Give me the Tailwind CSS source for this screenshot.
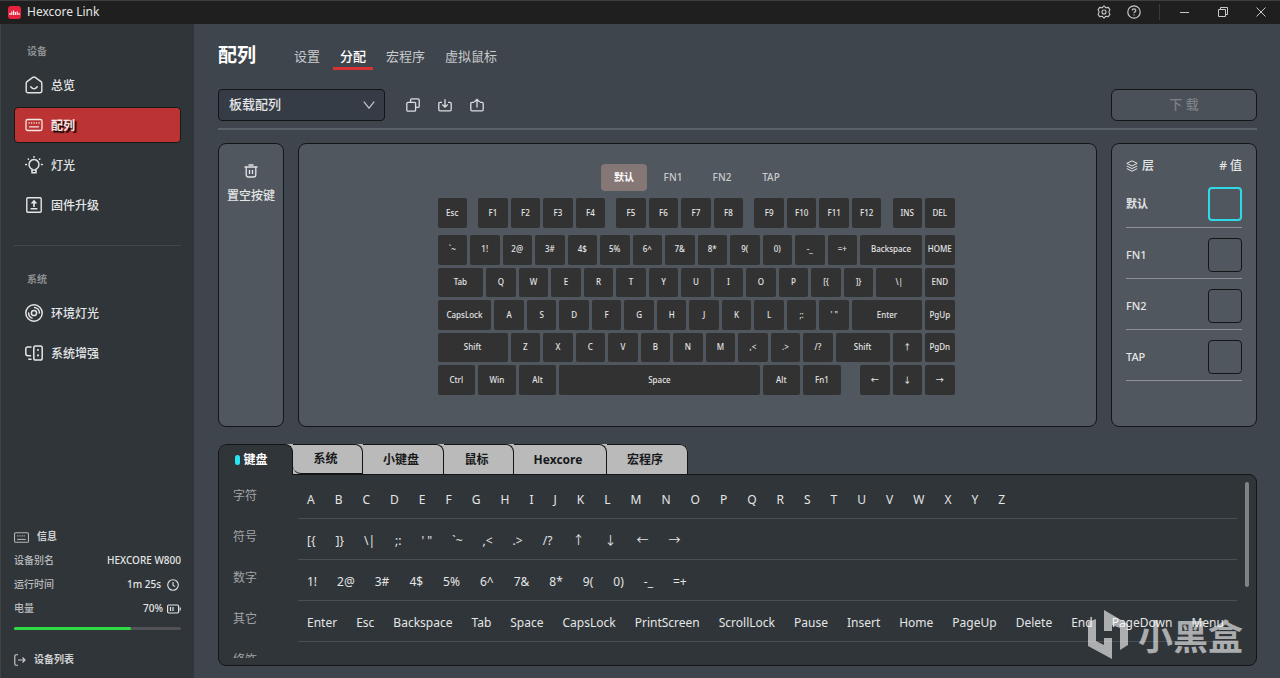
<!DOCTYPE html>
<html lang="zh-CN">
<head>
    <meta charset="UTF-8">
    <meta name="viewport" content="width=device-width, initial-scale=1.0">
    <title>Hexcore Link</title>
    <script src="https://cdn.jsdelivr.net/npm/@tailwindcss/browser@4"></script>
</head>
<body class="h-screen flex flex-col overflow-hidden bg-[#3e454c] text-[#e4e5e6] text-xs font-['Noto_Sans','Noto_Sans_CJK_SC',sans-serif]">
    <!-- Title bar -->
    <header class="h-6 shrink-0 flex items-center justify-between bg-[#1f1f1f] border-t border-[#3c3e3f] pl-2 pr-3.5 pb-px">
        <div class="flex items-center gap-1.5">
            <svg class="size-[13px]" viewBox="0 0 13 13"><rect width="13" height="13" rx="3" fill="#e8213f"/><path d="M2 9V7M3.8 9V5.5M5.6 9V4.5M7.4 9V6M9.2 9V5.5M11 9V7" stroke="#fff" stroke-width="1.1"/></svg>
            <span>Hexcore Link</span>
        </div>
        <div class="flex items-center text-[#c8c8c8]">
            <button aria-label="设置" class="mr-4"><svg class="size-3.5" viewBox="0 0 14 14" fill="none" stroke="currentColor" stroke-width="1.1" stroke-linejoin="round"><path d="M7 .8 8.7 2.7 11.3 2.4 12.9 4.6 11.9 7 12.9 9.4 11.3 11.6 8.7 11.3 7 13.2 5.3 11.3 2.7 11.6 1.1 9.4 2.1 7 1.1 4.6 2.7 2.4 5.3 2.7Z"/><circle cx="7" cy="7" r="2"/></svg></button>
            <button aria-label="帮助"><svg class="size-3.5" viewBox="0 0 14 14" fill="none" stroke="currentColor" stroke-width="1.2"><circle cx="7" cy="7" r="6.2"/><path d="M5.2 5.6C5.2 3.2 8.8 3.3 8.8 5.4 8.8 6.7 7 6.7 7 8.2M7 9.4V10.6"/></svg></button>
            <span class="w-px h-4 bg-[#3a3a3a] ml-[18px] mr-5"></span>
            <button aria-label="最小化" class="mr-7"><svg class="size-[10px]" viewBox="0 0 10 10" stroke="currentColor"><path d="M0 5.5H9"/></svg></button>
            <button aria-label="还原" class="mr-7"><svg class="size-[10px]" viewBox="0 0 10 10" fill="none" stroke="currentColor"><path d="M.5 2.5H7.5V9.5H.5ZM2.5 2.5V.5H9.5V7.5H7.5"/></svg></button>
            <button aria-label="关闭"><svg class="size-[10px]" viewBox="0 0 10 10" stroke="currentColor"><path d="M.5.5 9.5 9.5M9.5.5.5 9.5"/></svg></button>
        </div>
    </header>

    <div class="flex-1 min-h-0 flex">
        <!-- Sidebar -->
        <aside class="w-[194px] shrink-0 bg-[#303539] border-l border-[#3f4346] flex flex-col px-[13px] pt-[18px] pb-2">
            <h2 class="pl-[13px] text-[10px] leading-[18px] font-bold text-[#8d9092]">设备</h2>
            <nav class="mt-[5px] flex flex-col font-medium">
                <a href="#" class="h-10 flex items-center gap-2 pl-[11px]">
                    <svg class="size-[18px]" viewBox="0 0 18 18" fill="none" stroke="currentColor" stroke-width="1.4" stroke-linecap="round" stroke-linejoin="round"><path d="M1.2 7.2C1.2 6.5 1.5 6 2 5.6L7.8 1.4Q9 .6 10.2 1.4L16 5.6C16.5 6 16.8 6.5 16.8 7.2V14.8Q16.8 16.8 14.8 16.8H3.2Q1.2 16.8 1.2 14.8Z"/><path d="M5.7 10.8Q9 15 12.3 10.8"/></svg>
                    <span class="pt-0.5">总览</span>
                </a>
                <a href="#" class="h-9 my-0.5 flex items-center gap-2 pl-2.5 rounded bg-[#bb3433] border border-[#17181a] font-bold text-[#f5e6e6] text-shadow-[2px_2px_1px_#000]">
                    <svg class="size-[18px]" viewBox="0 0 18 18" fill="none" stroke="currentColor" stroke-width="1.3" stroke-linecap="round"><rect x="1" y="3.5" width="16" height="11" rx="1.8"/><path d="M4 7H4.2M6.5 7H6.7M9 7H9.2M11.5 7H11.7M14 7H14.2M4.5 10.8H13.5"/></svg>
                    <span class="pt-0.5">配列</span>
                </a>
                <a href="#" class="h-10 flex items-center gap-2 pl-[11px]">
                    <svg class="size-[18px]" viewBox="0 0 18 18" fill="none" stroke="currentColor" stroke-width="1.5" stroke-linecap="round"><path d="M7 14V13.2A5 5 0 1 1 11 13.2V14Z"/><path d="M7 14.4V16.8H11V14.4M9 .7V1.2M3.2 3 3.5 3.3M14.8 3 14.5 3.3M.7 8.6H1.5M16.5 8.6H17.3"/></svg>
                    <span class="pt-0.5">灯光</span>
                </a>
                <a href="#" class="h-10 flex items-center gap-2 pl-[11px]">
                    <svg class="size-[18px]" viewBox="0 0 18 18" fill="none" stroke="currentColor" stroke-width="1.4"><rect x="1.8" y="1.8" width="14.4" height="14.4" rx="1"/><path d="M9 11V6M5.6 12.8H12.4" stroke-width="1.6"/><path d="M9 3.8 12.3 7.6H5.7Z" fill="currentColor" stroke="none"/></svg>
                    <span class="pt-0.5">固件升级</span>
                </a>
            </nav>
            <hr class="mt-5 border-[#42474a]">
            <h2 class="mt-6 pl-[13px] text-[10px] leading-[18px] font-bold text-[#8d9092]">系统</h2>
            <nav class="mt-[5px] flex flex-col font-medium">
                <a href="#" class="h-10 flex items-center gap-2 pl-[11px]">
                    <svg class="size-[18px]" viewBox="0 0 18 18" fill="none" stroke="currentColor" stroke-width="1.5" stroke-linecap="round"><circle cx="9" cy="9" r="8.2"/><circle cx="9" cy="9" r="2.6"/><path d="M3.6 9A5.5 5.5 0 0 0 7 14.1M9.5 3.4A5.5 5.5 0 0 1 14.4 9"/></svg>
                    <span class="pt-0.5">环境灯光</span>
                </a>
                <a href="#" class="h-10 flex items-center gap-2 pl-[11px]">
                    <svg class="size-[18px]" viewBox="0 0 18 18" fill="none" stroke="currentColor" stroke-width="1.5" stroke-linecap="round"><path d="M6 3H3Q.8 3 .8 5V9.5Q.8 11.7 3 11.7H5.5M3.8 15.3H6"/><rect x="8.8" y="2" width="8.4" height="14" rx="1.8"/><path d="M13 6V6.1M13 11.3V11.5" stroke-width="2"/></svg>
                    <span class="pt-0.5">系统增强</span>
                </a>
            </nav>

            <div class="mt-auto text-[10px] font-medium">
                <h2 class="flex items-center gap-2 h-5 font-bold text-[#d0d1d2]">
                    <svg class="size-[15px] text-[#b4b6b8]" viewBox="0 0 14 14" fill="none" stroke="currentColor"><rect x=".5" y="2.5" width="13" height="9" rx="1"/><path d="M3 5.5H11" stroke-dasharray="1 1"/><path d="M3 8.8H11"/></svg>
                    信息
                </h2>
                <dl class="mt-0.5">
                    <div class="h-6 flex items-center justify-between"><dt class="text-[#b9bbbd]">设备别名</dt><dd>HEXCORE W800</dd></div>
                    <div class="h-6 flex items-center justify-between"><dt class="text-[#b9bbbd]">运行时间</dt>
                        <dd class="flex items-center gap-1.5 pr-0.5">1m 25s
                            <svg class="size-3" viewBox="0 0 12 12" fill="none" stroke="currentColor" stroke-width="1.1"><circle cx="6" cy="6" r="5.3"/><path d="M6 3V6.2L8 7.6"/></svg>
                        </dd>
                    </div>
                    <div class="h-6 flex items-center justify-between"><dt class="text-[#b9bbbd]">电量</dt>
                        <dd class="flex items-center gap-1">70%
                            <svg class="w-3.5 h-3" viewBox="0 0 14 12" fill="none" stroke="currentColor" stroke-width="1.2"><rect x=".6" y="2" width="11" height="8" rx="1.2"/><path d="M3.5 4V8M6 4V8M13.2 4.5V7.5"/></svg>
                        </dd>
                    </div>
                </dl>
                <div class="mt-1.5 h-[3px] rounded-full bg-[#505255]" role="progressbar" aria-label="电量" aria-valuenow="70">
                    <div class="h-full rounded-full bg-[#2edc41]" style="width: 70%"></div>
                </div>
                <a href="#" class="mt-5 h-5 flex items-center gap-2 font-bold text-[#d0d1d2]">
                    <svg class="size-3" viewBox="0 0 12 12" fill="none" stroke="currentColor" stroke-width="1.1"><path d="M4 .8H2Q.8.8.8 2V10Q.8 11.2 2 11.2H4M4 6H11M8.5 3.5 11 6 8.5 8.5"/></svg>
                    设备列表
                </a>
            </div>
        </aside>

        <!-- Main area -->
        <main class="flex-1 min-w-0 flex flex-col pl-6 pr-[23px] pt-[15px] pb-3">
            <div class="h-8 shrink-0 flex items-center">
                <h1 class="text-[19px] leading-7 font-bold text-white">配列</h1>
                <nav class="ml-[31px] flex gap-1.5 text-[13px] leading-[22px] text-[#c9cbcd]">
                    <a href="#" class="px-[7px] border-b-[3px] border-transparent pt-1">设置</a>
                    <a href="#" class="px-[7px] border-b-[3px] border-[#d93236] pt-1 font-medium text-white">分配</a>
                    <a href="#" class="px-[7px] border-b-[3px] border-transparent pt-1">宏程序</a>
                    <a href="#" class="px-[7px] border-b-[3px] border-transparent pt-1">虚拟鼠标</a>
                </nav>
            </div>

            <div class="mt-[18px] shrink-0 flex items-center pb-[7px] border-b-2 border-[#5b6168]">
                <div class="relative w-[167px] h-8">
                    <select aria-label="配列" class="appearance-none w-full h-full rounded border border-[#141516] bg-[#363c45] px-2.5 text-[13px] font-medium">
                        <option>板载配列</option>
                    </select>
                    <svg class="absolute right-2.5 top-3 w-3 h-2 pointer-events-none" viewBox="0 0 12 8" fill="none" stroke="#c4c6c8" stroke-width="1.2"><path d="M.8.6 6 7.2 11.2.6"/></svg>
                </div>
                <div class="ml-[21px] flex gap-[18px] text-[#dcdddf]">
                    <button aria-label="复制"><svg class="size-3.5" viewBox="0 0 14 14" fill="none" stroke="currentColor" stroke-width="1.3"><rect x=".8" y="4.4" width="8.8" height="8.8" rx="1.2"/><path d="M4.6 4V2Q4.6.8 5.8.8H12Q13.2.8 13.2 2V8.2Q13.2 9.4 12 9.4H10"/></svg></button>
                    <button aria-label="导入"><svg class="size-3.5" viewBox="0 0 14 14" fill="none" stroke="currentColor" stroke-width="1.3"><path d="M4 4.4H2Q.8 4.4.8 5.6V11.6Q.8 12.8 2 12.8H12Q13.2 12.8 13.2 11.6V5.6Q13.2 4.4 12 4.4H10M7 1.2V9M4.3 6.5 7 9.1 9.7 6.5"/></svg></button>
                    <button aria-label="导出"><svg class="size-3.5" viewBox="0 0 14 14" fill="none" stroke="currentColor" stroke-width="1.3"><path d="M4 4.4H2Q.8 4.4.8 5.6V11.6Q.8 12.8 2 12.8H12Q13.2 12.8 13.2 11.6V5.6Q13.2 4.4 12 4.4H10M7 9.4V1.4M4.3 4 7 1.3 9.7 4"/></svg></button>
                </div>
                <button class="ml-auto w-[146px] h-8 rounded-md border border-[#141516] bg-[#4a5158] text-[13px] font-medium text-[#7d8287]">下 载</button>
            </div>

            <div class="mt-[13px] shrink-0 flex gap-3.5">
                <button class="w-[66px] flex flex-col items-center justify-start gap-2.5 pt-5 rounded-lg border border-[#141516] bg-[#50575e] font-medium">
                    <svg class="size-3.5" viewBox="0 0 14 14" fill="none" stroke="currentColor" stroke-width="1.3"><path d="M.5 3H13.5M4.5 1H9.5M2.2 3V10.5Q2.2 13 4.5 13H9.5Q11.8 13 11.8 10.5V3M5.5 6V10M8.5 6V10"/></svg>
                    置空按键
                </button>

                <section class="flex-1 flex flex-col items-center pt-5 pb-[31px] rounded-lg border border-[#141516] bg-[#50575e]">
                    <div class="flex gap-[3px] text-[10px] text-[#c9cbcd] font-medium">
                        <button class="w-[46px] h-[27px] rounded bg-[#847776] font-bold text-white">默认</button>
                        <button class="w-[46px] h-[27px]">FN1</button>
                        <button class="w-[46px] h-[27px]">FN2</button>
                        <button class="w-[46px] h-[27px]">TAP</button>
                    </div>
                    <div id="keyboard" class="mt-[7px] w-[520px] text-[8px] font-medium"></div>
                </section>

                <section class="w-[146px] px-3.5 pt-[11px] rounded-lg border border-[#141516] bg-[#50575e] font-medium">
                    <div class="h-[22px] flex items-center justify-between">
                        <span class="flex items-center gap-1"><svg class="size-3" viewBox="0 0 12 12" fill="none" stroke="currentColor" stroke-linejoin="round"><path d="M6 .8 11.2 3.4 6 6 .8 3.4ZM.8 6 6 8.6 11.2 6M.8 8.6 6 11.2 11.2 8.6"/></svg>层</span>
                        <span># 值</span>
                    </div>
                    <div class="h-[51px] pt-1 flex items-center justify-between border-b border-[#8c9197] text-[11px] font-bold">默认<button aria-label="默认" class="size-[34px] rounded border-2 border-[#2fd9e6]"></button></div>
                    <div class="h-[51px] pt-1 flex items-center justify-between border-b border-[#8c9197] text-[11px]">FN1<button aria-label="FN1" class="size-[34px] rounded border border-[#141516]"></button></div>
                    <div class="h-[51px] pt-1 flex items-center justify-between border-b border-[#8c9197] text-[11px]">FN2<button aria-label="FN2" class="size-[34px] rounded border border-[#141516]"></button></div>
                    <div class="h-[51px] pt-1 flex items-center justify-between border-b border-[#8c9197] text-[11px]">TAP<button aria-label="TAP" class="size-[34px] rounded border border-[#141516]"></button></div>
                </section>
            </div>

            <!-- Key picker -->
            <div class="mt-[17px] shrink-0 flex text-[#17181a] font-bold">
                <div class="bg-[#bababa] rounded-t-lg flex">
                    <button class="w-[75px] h-[31px] -mb-px relative flex items-center justify-center gap-[3px] pr-2 rounded-t-lg border border-b-0 border-[#141516] bg-[#303539] text-white"><span class="w-[5px] h-2.5 rounded-full bg-[#25e6f2]"></span>键盘</button>
                    <button class="w-[70px] h-[30px] pr-1 rounded-tr-lg rounded-bl-lg border-y border-r border-[#141516]">系统</button>
                    <button class="w-[81px] h-[30px] pr-1 rounded-tr-lg border-t border-r border-[#141516]">小键盘</button>
                    <button class="w-[70px] h-[30px] pr-1 rounded-tr-lg border-t border-r border-[#141516]">鼠标</button>
                    <button class="w-[93px] h-[30px] pr-1 rounded-tr-lg border-t border-r border-[#141516]">Hexcore</button>
                    <button class="w-[81px] h-[30px] pr-1 rounded-tr-lg border-t border-r border-[#141516]">宏程序</button>
                </div>
            </div>
            <section class="flex-1 min-h-0 flex rounded-lg rounded-tl-none border border-[#141516] bg-[#303539] pl-3.5 pr-[7px] py-[7px]">
                <div id="picker" class="flex-1 min-w-0 overflow-hidden -mt-1"></div>
                <div class="ml-2 w-1 h-[105px] rounded-full bg-[#808385]"></div>
            </section>
        </main>
    </div>

    <!-- Watermark -->
    <div class="absolute right-[37px] bottom-[18px] flex items-center gap-2 text-white/60 pointer-events-none">
        <svg class="w-[42px] h-[50px]" viewBox="0 0 42 50" fill="currentColor"><path d="M0 12 8 9V31L16 35V28H24V49L0 36ZM16 0 40 14V35L32 40V18L24 15V21H16Z"/></svg>
        <span class="text-[35px] leading-10 font-bold font-['Noto_Sans_CJK_SC',sans-serif]">小黑盒</span>
    </div>

    <script>
        // [label, width in quarter units]; an empty label leaves a gap
        const functionRow = [['Esc', 4], ['', 1], ['F1', 4], ['F2', 4], ['F3', 4], ['F4', 4], ['', 1], ['F5', 4], ['F6', 4], ['F7', 4], ['F8', 4], ['', 1], ['F9', 4], ['F10', 4], ['F11', 4], ['F12', 4], ['', 1], ['INS', 4], ['DEL', 4]];
        const mainRows = [
            [['`~', 4], ['1!', 4], ['2@', 4], ['3#', 4], ['4$', 4], ['5%', 4], ['6^', 4], ['7&amp;', 4], ['8*', 4], ['9(', 4], ['0)', 4], ['-_', 4], ['=+', 4], ['Backspace', 8], ['HOME', 4]],
            [['Tab', 6], ['Q', 4], ['W', 4], ['E', 4], ['R', 4], ['T', 4], ['Y', 4], ['U', 4], ['I', 4], ['O', 4], ['P', 4], ['[{', 4], [']}', 4], ['\\|', 6], ['END', 4]],
            [['CapsLock', 7], ['A', 4], ['S', 4], ['D', 4], ['F', 4], ['G', 4], ['H', 4], ['J', 4], ['K', 4], ['L', 4], [';:', 4], ['\' "', 4], ['Enter', 9], ['PgUp', 4]],
            [['Shift', 9], ['Z', 4], ['X', 4], ['C', 4], ['V', 4], ['B', 4], ['N', 4], ['M', 4], [',&lt;', 4], ['.&gt;', 4], ['/?', 4], ['Shift', 7], ['↑', 4], ['PgDn', 4]],
            [['Ctrl', 5], ['Win', 5], ['Alt', 5], ['Space', 25], ['Alt', 5], ['Fn1', 5], ['', 2], ['←', 4], ['↓', 4], ['→', 4]],
        ];
        const drawKeys = row => row.map(([label, size]) => `
            <div class="pr-[3px]" style="width: ${size / 64 * 100}%">
                ${label ? `<button class="w-full h-full rounded-xs bg-[#323232] whitespace-nowrap">${label}</button>` : ''}
            </div>`).join('');
        document.getElementById('keyboard').innerHTML = `
            <div class="flex h-[30px] mb-[7px]">${drawKeys(functionRow)}</div>
            <div class="grid grid-rows-5 gap-[3px] h-[160px]">
                ${mainRows.map(row => `<div class="flex">${drawKeys(row)}</div>`).join('')}
            </div>`;

        const groups = [
            ['字符', 'gap-5', 'ABCDEFGHIJKLMNOPQRSTUVWXYZ'.split('')],
            ['符号', 'gap-5', ['[{', ']}', '\\|', ';:', '\' "', '`~', ',&lt;', '.&gt;', '/?', '↑', '↓', '←', '→']],
            ['数字', 'gap-5', ['1!', '2@', '3#', '4$', '5%', '6^', '7&amp;', '8*', '9(', '0)', '-_', '=+']],
            ['其它', 'gap-[19px]', ['Enter', 'Esc', 'Backspace', 'Tab', 'Space', 'CapsLock', 'PrintScreen', 'ScrollLock', 'Pause', 'Insert', 'Home', 'PageUp', 'Delete', 'End', 'PageDown', 'Menu']],
            ['修饰', 'gap-5', ['LCtrl', 'LShift', 'LAlt', 'LWin', 'RCtrl', 'RShift', 'RAlt', 'RWin']],
        ];
        document.getElementById('picker').innerHTML = groups.map(([name, gap, keys]) => `
            <div class="h-[41px] flex">
                <h3 class="w-[65px] shrink-0 pt-2.5 text-[#a0a3a5]">${name}</h3>
                <div class="flex-1 flex items-end ${gap} pl-[9px] pb-2.5 border-b border-[#4a4f52]">
                    ${keys.map(key => `<button class="shrink-0 leading-4">${key}</button>`).join('')}
                </div>
            </div>`).join('');
    </script>
</body>
</html>
